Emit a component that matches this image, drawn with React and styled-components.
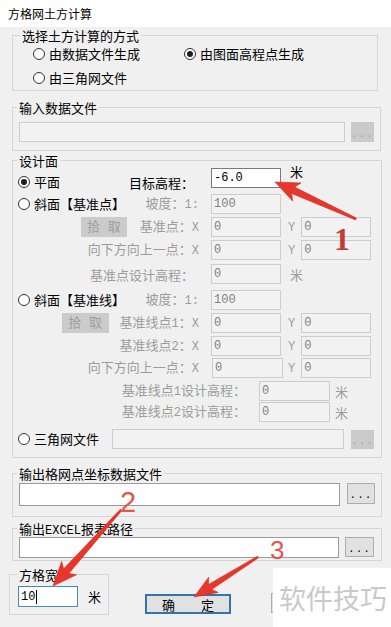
import React from "react";
import styled, { createGlobalStyle } from "styled-components";

const Global = createGlobalStyle`
  html, body { margin: 0; padding: 0; background: #f0f0f0; }
  body {
    font-family: "Noto Sans CJK SC", sans-serif;
    font-size: 13px;
    color: #000;
  }
`;

const cjk = `"Noto Sans CJK SC", sans-serif`;
const mono = `"Liberation Mono", "Noto Sans CJK SC", monospace`;

const shift = (p) =>
  p.$dy
    ? p.$dy > 0
      ? `margin-top: ${2 * p.$dy}px;`
      : `margin-bottom: ${-2 * p.$dy}px;`
    : "";

const Window = styled.div`
  position: relative;
  width: 391px;
  height: 627px;
  overflow: hidden;
  background: #f0f0f0;
  display: flex;
  flex-direction: column;
`;

const TitleBar = styled.div`
  box-sizing: border-box;
  height: 27px;
  flex: none;
  background: #fff;
  display: flex;
  align-items: center;
  padding-left: 8px;
  font-family: ${cjk};
  font-size: 12px;
  line-height: 14px;
`;

const Body = styled.div`
  display: flex;
  flex-direction: column;
  padding-left: 12px;
`;

const Group = styled.fieldset`
  box-sizing: border-box;
  width: ${(p) => p.$w}px;
  margin: ${(p) => p.$mt}px 0 0 0;
  padding: 0;
  border: 1px solid #d6d6d6;
  min-inline-size: auto;
  flex: none;
`;

const Legend = styled.legend`
  margin-left: ${(p) => p.$ml}px;
  padding: 0 2px;
  height: 15px;
  line-height: 15px;
  font-family: ${cjk};
  font-size: 13px;
  white-space: nowrap;
`;

const Latin = styled.span`
  font-family: "Liberation Mono", monospace;
  font-size: 12px;
`;

const ModeGrid = styled.div`
  display: grid;
  grid-template-columns: 151px auto;
  grid-auto-rows: 18px;
  row-gap: 6px;
  padding: 2px 0 3px 20px;
`;

const RadioLabel = styled.div`
  display: inline-flex;
  align-items: center;
  gap: 4px;
  height: 18px;
  line-height: 16px;
  font-family: ${cjk};
  font-size: 13px;
  white-space: nowrap;
  color: #000;
`;

const RadioCircle = styled.span`
  box-sizing: border-box;
  width: 12px;
  height: 12px;
  flex: none;
  border: 1px solid #333;
  border-radius: 50%;
  background: #fff;
  display: flex;
  align-items: center;
  justify-content: center;
  &::after {
    content: "";
    display: ${(p) => (p.$checked ? "block" : "none")};
    width: 6px;
    height: 6px;
    border-radius: 50%;
    background: #1e1e1e;
  }
`;

const Radio = ({ checked, children }) => (
  <RadioLabel>
    <RadioCircle $checked={checked} />
    {children}
  </RadioLabel>
);

const FileRow = styled.div`
  display: flex;
  align-items: flex-start;
  gap: ${(p) => p.$gap}px;
  padding: ${(p) => p.$pad};
`;

const TextBox = styled.div`
  box-sizing: border-box;
  flex: none;
  width: ${(p) => p.$w}px;
  height: ${(p) => p.$h || 20}px;
  margin-left: ${(p) => p.$ml || 0}px;
  border: 1px solid
    ${(p) =>
      p.$focus ? "#3f8fb2" : p.$disabled ? "#cdcdcd" : p.$soft ? "#9a9a9a" : "#7a7a7a"};
  background: ${(p) => (p.$disabled ? "#f2f2f2" : "#fff")};
  color: ${(p) => (p.$disabled ? "#808080" : "#000")};
  font-family: ${mono};
  font-size: 12px;
  line-height: 16px;
  padding: 0 2px;
  display: flex;
  align-items: center;
  white-space: nowrap;
`;

const Caret = styled.span`
  display: inline-block;
  width: 1px;
  height: 14px;
  background: #000;
  margin-left: 1px;
`;

const DotButton = styled.div`
  box-sizing: border-box;
  flex: none;
  width: ${(p) => p.$w}px;
  height: ${(p) => p.$h || 20}px;
  margin-left: ${(p) => p.$ml || 0}px;
  border: 1px solid ${(p) => (p.$disabled ? "#c9c9c9" : "#adadad")};
  background: ${(p) => (p.$disabled ? "#cacaca" : "#e1e1e1")};
  color: ${(p) => (p.$disabled ? "#9e9e9e" : "#000")};
  font-family: ${mono};
  font-size: 11px;
  letter-spacing: 1px;
  display: flex;
  align-items: center;
  justify-content: center;
  padding-top: 3px;
`;

const DesignBody = styled.div`
  display: flex;
  flex-direction: column;
  padding-bottom: 8px;
`;

const Row = styled.div`
  display: flex;
  align-items: center;
  height: 20px;
  margin-top: ${(p) => p.$mt}px;
`;

const Lead = styled.div`
  box-sizing: border-box;
  flex: none;
  width: ${(p) => p.$w}px;
  display: flex;
  align-items: center;
  justify-content: ${(p) => p.$justify || "space-between"};
  gap: ${(p) => p.$gap || 0}px;
  padding-left: 5px;
  ${shift}
`;

const Text = styled.span`
  flex: none;
  font-family: ${cjk};
  font-size: 13px;
  line-height: 15px;
  white-space: nowrap;
  color: ${(p) => (p.$disabled ? "#9c9c9c" : "#000")};
  margin-left: ${(p) => p.$ml || 0}px;
  margin-right: ${(p) => p.$mr || 0}px;
  ${shift}
`;

const PickButton = styled.div`
  box-sizing: border-box;
  flex: none;
  width: ${(p) => p.$w}px;
  height: 20px;
  background: #cbcbcb;
  color: #9d9d9d;
  font-family: ${mono};
  font-size: 13px;
  line-height: 15px;
  display: flex;
  align-items: center;
  justify-content: center;
  white-space: pre;
`;

const BottomRow = styled.div`
  display: flex;
  align-items: flex-start;
  margin: 6px 0 0 -3px;
`;

const WidthBody = styled.div`
  display: flex;
  align-items: center;
  padding: 4px 0 7px 8px;
`;

const PushButton = styled.div`
  box-sizing: border-box;
  flex: none;
  width: 86px;
  height: 20px;
  margin: ${(p) => p.$mt}px 0 0 ${(p) => p.$ml}px;
  border: ${(p) => (p.$default ? "2px solid #2f73b3" : "1px solid #adadad")};
  background: #e1e1e1;
  font-family: ${cjk};
  font-size: 13px;
  line-height: 15px;
  display: flex;
  align-items: center;
  justify-content: center;
  white-space: pre;
`;

const Watermark = styled.div`
  position: absolute;
  left: 273px;
  top: 568px;
  width: 118px;
  height: 59px;
  background: #fff;
  display: flex;
  align-items: center;
  padding-left: 6px;
  box-sizing: border-box;
  font-family: ${cjk};
  font-size: 27px;
  line-height: 30px;
  color: #c9c9c9;
  white-space: nowrap;
`;

const Overlay = styled.svg`
  position: absolute;
  left: 0;
  top: 0;
  pointer-events: none;
`;

const Marker = styled.span`
  position: absolute;
  left: ${(p) => p.$x}px;
  top: ${(p) => p.$y}px;
  font-family: ${(p) => (p.$serif ? `"Liberation Serif", serif` : `"Liberation Sans", sans-serif`)};
  font-weight: ${(p) => (p.$serif ? 700 : 400)};
  font-size: ${(p) => p.$size}px;
  line-height: ${(p) => p.$size}px;
  color: ${(p) => p.$color};
`;

function arrowPoints(tx, ty, hx, hy, tailW, neckW, headLen, headW) {
  const dx = hx - tx;
  const dy = hy - ty;
  const L = Math.hypot(dx, dy);
  const ux = dx / L;
  const uy = dy / L;
  const px = -uy;
  const py = ux;
  const nx = hx - ux * headLen;
  const ny = hy - uy * headLen;
  const bx = hx - ux * (headLen + 4);
  const by = hy - uy * (headLen + 4);
  const pts = [
    [tx + (px * tailW) / 2, ty + (py * tailW) / 2],
    [nx + (px * neckW) / 2, ny + (py * neckW) / 2],
    [bx + (px * headW) / 2, by + (py * headW) / 2],
    [hx, hy],
    [bx - (px * headW) / 2, by - (py * headW) / 2],
    [nx - (px * neckW) / 2, ny - (py * neckW) / 2],
    [tx - (px * tailW) / 2, ty - (py * tailW) / 2],
  ];
  return pts.map((p) => `${p[0].toFixed(1)},${p[1].toFixed(1)}`).join(" ");
}

const arrows = [
  [356, 219, 275, 182, 2, 7, 20, 20],
  [121, 510, 53, 586, 2, 7, 20, 20],
  [258, 557, 194, 597, 2, 6, 19, 18],
];

const XYInputs = ({ xml = 12, xw = 70, yml = 7 }) => (
  <>
    <TextBox $w={xw} $ml={xml} $disabled>0</TextBox>
    <Text $ml={yml} $disabled>
      <Latin>Y</Latin>
    </Text>
    <TextBox $w={70} $ml={6} $disabled>0</TextBox>
  </>
);

export default function App() {
  return (
    <>
      <Global />
      <Window>
        <TitleBar>方格网土方计算</TitleBar>
        <Body>
          <Group $w={366} $mt={1}>
            <Legend $ml={7}>选择土方计算的方式</Legend>
            <ModeGrid>
              <Radio>由数据文件生成</Radio>
              <Radio checked>由图面高程点生成</Radio>
              <Radio>由三角网文件</Radio>
            </ModeGrid>
          </Group>

          <Group $w={369} $mt={9}>
            <Legend $ml={4}>输入数据文件</Legend>
            <FileRow $gap={6} $pad="7px 0 8px 6px">
              <TextBox $w={326} $disabled />
              <DotButton $w={23} $disabled>...</DotButton>
            </FileRow>
          </Group>

          <Group $w={370} $mt={2}>
            <Legend $ml={4}>设计面</Legend>
            <DesignBody>
              <Row $mt={0}>
                <Lead $w={186} $dy={4}>
                  <Radio checked>平面</Radio>
                  <Text $mr={5}>目标高程：</Text>
                </Lead>
                <TextBox $w={70} $ml={12}>-6.0</TextBox>
                <Text $ml={9} $dy={-7}>米</Text>
              </Row>
              <Row $mt={6}>
                <Lead $w={186}>
                  <Radio>斜面【基准点】</Radio>
                  <Text $disabled>
                    坡度：<Latin>1:</Latin>
                  </Text>
                </Lead>
                <TextBox $w={70} $ml={12} $disabled>100</TextBox>
              </Row>
              <Row $mt={3}>
                <Lead $w={186} $justify="flex-end" $gap={13}>
                  <PickButton $w={46}>拾 取</PickButton>
                  <Text $disabled>
                    基准点：<Latin>X</Latin>
                  </Text>
                </Lead>
                <XYInputs />
              </Row>
              <Row $mt={3}>
                <Lead $w={186} $justify="flex-end">
                  <Text $disabled>
                    向下方向上一点：<Latin>X</Latin>
                  </Text>
                </Lead>
                <XYInputs />
              </Row>
              <Row $mt={4}>
                <Lead $w={186} $justify="flex-end">
                  <Text $disabled $mr={5}>基准点设计高程：</Text>
                </Lead>
                <TextBox $w={70} $ml={12} $disabled>0</TextBox>
                <Text $ml={9} $disabled>米</Text>
              </Row>
              <Row $mt={6}>
                <Lead $w={186}>
                  <Radio>斜面【基准线】</Radio>
                  <Text $disabled>
                    坡度：<Latin>1:</Latin>
                  </Text>
                </Lead>
                <TextBox $w={70} $ml={12} $disabled>100</TextBox>
              </Row>
              <Row $mt={3}>
                <Lead $w={186} $justify="flex-end" $gap={11}>
                  <PickButton $w={47}>拾 取</PickButton>
                  <Text $disabled>
                    基准线点<Latin>1</Latin>：<Latin>X</Latin>
                  </Text>
                </Lead>
                <XYInputs />
              </Row>
              <Row $mt={3}>
                <Lead $w={186} $justify="flex-end">
                  <Text $disabled>
                    基准线点<Latin>2</Latin>：<Latin>X</Latin>
                  </Text>
                </Lead>
                <XYInputs />
              </Row>
              <Row $mt={2}>
                <Lead $w={186} $justify="flex-end">
                  <Text $disabled>
                    向下方向上一点：<Latin>X</Latin>
                  </Text>
                </Lead>
                <XYInputs xml={13} xw={71} yml={5} />
              </Row>
              <Row $mt={3}>
                <Lead $w={233} $justify="flex-end">
                  <Text $disabled>
                    基准线点<Latin>1</Latin>设计高程：
                  </Text>
                </Lead>
                <TextBox $w={71} $ml={13} $disabled>0</TextBox>
                <Text $ml={5} $disabled>米</Text>
              </Row>
              <Row $mt={1}>
                <Lead $w={233} $justify="flex-end">
                  <Text $disabled>
                    基准线点<Latin>2</Latin>设计高程：
                  </Text>
                </Lead>
                <TextBox $w={71} $ml={13} $disabled>0</TextBox>
                <Text $ml={5} $disabled>米</Text>
              </Row>
              <Row $mt={7}>
                <Lead $w={99}>
                  <Radio>三角网文件</Radio>
                </Lead>
                <TextBox $w={232} $disabled />
                <DotButton $w={23} $h={19} $ml={7} $disabled>...</DotButton>
              </Row>
            </DesignBody>
          </Group>

          <Group $w={370} $mt={8}>
            <Legend $ml={4}>输出格网点坐标数据文件</Legend>
            <FileRow $gap={7} $pad="2px 0 10px 6px">
              <TextBox $w={321} $h={23} $soft />
              <DotButton $w={28} $h={21}>...</DotButton>
            </FileRow>
          </Group>

          <Group $w={370} $mt={4}>
            <Legend $ml={4}>
              输出<Latin>EXCEL</Latin>报表路径
            </Legend>
            <FileRow $gap={6} $pad="1px 0 2px 6px">
              <TextBox $w={320} $h={21} $soft />
              <DotButton $w={29} $h={20}>...</DotButton>
            </FileRow>
          </Group>

          <BottomRow>
            <Group $w={100} $mt={0}>
              <Legend $ml={7}>方格宽</Legend>
              <WidthBody>
                <TextBox $w={60} $h={21} $focus>
                  10
                  <Caret />
                </TextBox>
                <Text $ml={10}>米</Text>
              </WidthBody>
            </Group>
            <PushButton $default $ml={36} $mt={27}>确　　定</PushButton>
            <PushButton $ml={40} $mt={26} aria-label="取消" />
          </BottomRow>
        </Body>

        <Watermark>软件技巧</Watermark>

        <Overlay width="391" height="627" viewBox="0 0 391 627">
          {arrows.map((a, i) => (
            <polygon
              key={i}
              points={arrowPoints(...a)}
              fill="#e7372c"
              stroke="#cf2b22"
              strokeWidth="0.6"
              strokeLinejoin="round"
            />
          ))}
        </Overlay>
        <Marker $x={334} $y={223} $size={32} $serif $color="#c23b34">1</Marker>
        <Marker $x={120} $y={488} $size={29} $color="#e0574b">2</Marker>
        <Marker $x={270} $y={537} $size={26} $color="#e0574b">3</Marker>
      </Window>
    </>
  );
}
